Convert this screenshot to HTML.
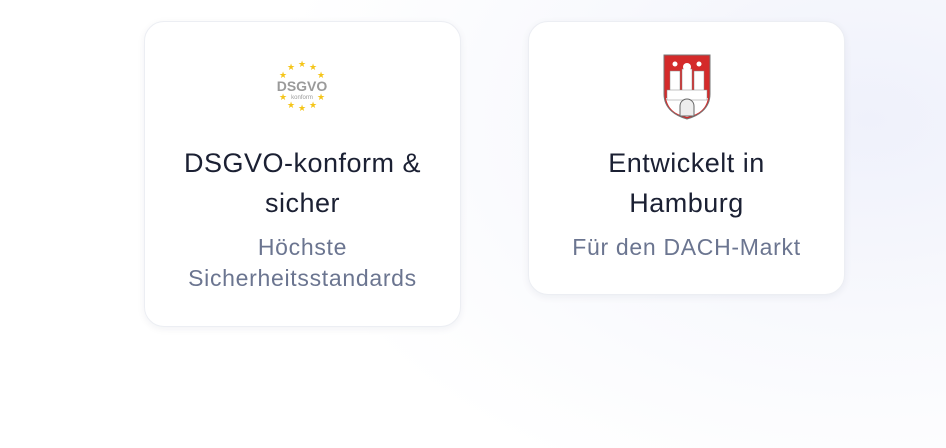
<!DOCTYPE html><html><head><style>
body{margin:0;width:946px;height:448px;overflow:hidden;background:radial-gradient(ellipse 600px 400px at 870px 120px,#eff1fb 0%,#f8f9fd 50%,#fff 100%);font-family:"Liberation Sans",sans-serif;}
.card{position:absolute;top:21px;width:317px;background:#fff;border:1px solid #eceef3;border-radius:20px;box-shadow:0 2px 8px rgba(20,30,60,.06);box-sizing:border-box;text-align:center}
.t{font-size:27px;letter-spacing:.5px;line-height:40px;color:#1b2033;margin-top:121px;white-space:nowrap}
.s{font-size:23px;letter-spacing:.7px;line-height:31px;color:#6b7590;margin-top:9px;white-space:nowrap}
</style></head><body>
<div class="card" style="left:144px;height:306px">
<svg style="position:absolute;left:128px;top:36px" width="58" height="58" viewBox="0 0 58 58">
<g fill="#f5c518" font-size="9" text-anchor="middle" font-family="DejaVu Sans">
<text x="29" y="9">★</text><text x="40" y="12">★</text><text x="48" y="20">★</text><text x="48" y="42">★</text><text x="40" y="50">★</text><text x="29" y="53">★</text><text x="18" y="50">★</text><text x="10" y="42">★</text><text x="10" y="20">★</text><text x="18" y="12">★</text></g>
<text x="29" y="33" fill="#9a9a9a" font-weight="bold" font-size="14" text-anchor="middle">DSGVO</text>
<text x="29" y="41" fill="#9a9a9a" font-size="6" text-anchor="middle">konform</text>
</svg>
<div class="t">DSGVO-konform &amp;<br>sicher</div>
<div class="s">Höchste<br>Sicherheitsstandards</div>
</div>
<div class="card" style="left:528px;height:274px">
<svg style="position:absolute;left:134px;top:32px" width="48" height="66" viewBox="0 0 48 66">
<path d="M1 1H47V40C47 55 35 62 24 65C13 62 1 55 1 40Z" fill="#d42a2a" stroke="#777" stroke-width="1"/>
<path d="M3 44H45C43 56 34 61 24 63C14 61 5 56 3 44Z" fill="#fff"/>
<rect x="7" y="17" width="10" height="24" fill="#fff" stroke="#888" stroke-width=".5"/>
<rect x="31" y="17" width="10" height="24" fill="#fff" stroke="#888" stroke-width=".5"/>
<rect x="19" y="15" width="10" height="26" fill="#fff" stroke="#888" stroke-width=".5"/>
<circle cx="24" cy="13" r="4" fill="#fff"/>
<rect x="4" y="36" width="40" height="10" fill="#fff" stroke="#888" stroke-width=".5"/>
<path d="M17 62V52A7 7 0 0 1 31 52V62Z" fill="#eee" stroke="#666" stroke-width="1"/>
<g fill="#fff"><circle cx="12" cy="10" r="2.5"/><circle cx="36" cy="10" r="2.5"/></g>
</svg>
<div class="t">Entwickelt in<br>Hamburg</div>
<div class="s">Für den DACH-Markt</div>
</div>
</body></html>
